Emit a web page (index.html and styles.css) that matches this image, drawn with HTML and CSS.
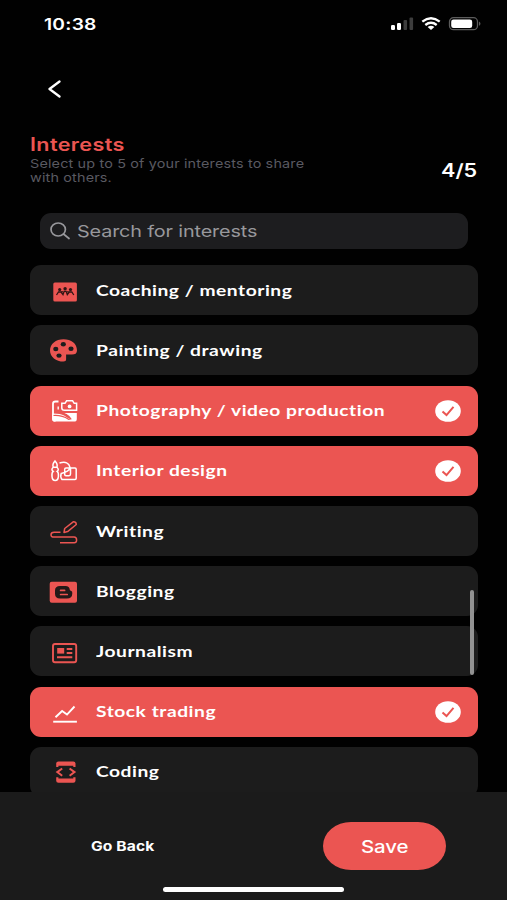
FILE: index.html
```html
<!DOCTYPE html>
<html lang="en">
<head>
<meta charset="utf-8">
<title>Interests</title>
<link rel="stylesheet" href="styles.css">
</head>
<body>
<main class="screen">
  <div class="status">
    <span class="time"><span class="wide">10:38</span></span>
    <svg class="status-icons" viewBox="0 0 92 16" fill="#fff">
      <rect x="1" y="9" width="4" height="5" rx="1.2"/><rect x="7" y="7" width="4" height="7" rx="1.2"/>
      <rect x="13.5" y="4" width="3.6" height="10" rx="1" fill="#3d3d3d"/><rect x="19.5" y="1.5" width="3.6" height="12.5" rx="1" fill="#3d3d3d"/>
      <g fill="none" stroke="#fff" stroke-width="2.4"><path d="M32.300 5.600Q41 -1 49.700 5.600"/><path d="M35.300 9Q41 4.600 46.700 9"/></g>
      <path d="M37.600 11Q41 8.600 44.400 11L41 14Z"/>
      <rect x="59.500" y="1.700" width="28" height="12" rx="4" fill="none" stroke="#5c5c5c" stroke-width="1.300"/>
      <rect x="61.200" y="3.400" width="21" height="8.600" rx="2.300"/><path d="M89 5.500Q92 7.700 89 10Z" fill="#5c5c5c"/>
    </svg>
  </div>
  <svg class="back" viewBox="0 0 14 18" fill="none" stroke="#fff" stroke-width="2.300" stroke-linecap="round" stroke-linejoin="round"><path d="M11.500 1.500L1.500 9l10 7.500"/></svg>
  <header class="heading">
    <div>
      <h1><span class="wide">Interests</span></h1>
      <p><span class="wide">Select up to 5 of your interests to share<br>with others.</span></p>
    </div>
    <span class="count"><span class="wide">4/5</span></span>
  </header>
  <div class="search">
    <svg viewBox="0 0 20 18" fill="none" stroke="#98989c" stroke-width="1.700" stroke-linecap="round"><ellipse cx="8.200" cy="7.500" rx="7.200" ry="6.500"/><path d="M13.500 12l5.500 4.500"/></svg>
    <span class="wide">Search for interests</span>
  </div>
  <ul class="list">
    <li>
      <svg class="icon" viewBox="0 0 28 24"><rect x="3.300" y="3.400" width="23.600" height="19.200" rx="1.500" fill="#eb5552"/><g fill="#301615"><circle cx="9.700" cy="10.600" r="1.600"/><circle cx="15.100" cy="9.700" r="1.700"/><circle cx="20.500" cy="10.600" r="1.600"/></g><path d="M6.500 16l2-3h2.500l2 2.600 1.200-3.300h1.900l1.200 3.300 2-2.600h2.500l2 3M11 13.500l2-1M17.200 12.500l2 1" fill="none" stroke="#301615" stroke-width="1.300"/></svg>
      <span class="wide">Coaching / mentoring</span>
    </li>
    <li>
      <svg class="icon" viewBox="0 0 28 24"><path d="M13.500 .2C5.800.2 0 5 0 11.400c0 6.300 6 11.200 13.500 11.200 1.700 0 2.600-.8 2.600-2V15.500H22c3.100 0 5-1.200 5-4.100C27 4.500 21.200.2 13.500.2Z" fill="#eb5552"/><g fill="#1c1c1c"><ellipse cx="5.800" cy="10" rx="2.600" ry="2.200"/><ellipse cx="13.300" cy="5.300" rx="2.600" ry="2.200"/><ellipse cx="21" cy="9.800" rx="2.600" ry="2.200"/><ellipse cx="9" cy="16.600" rx="2.600" ry="2.200"/></g></svg>
      <span class="wide">Painting / drawing</span>
    </li>
    <li class="on">
      <svg class="icon" viewBox="0 0 28 24"><path d="M8.500 2.500H5.500Q3 2.500 3 4.800V19.500Q3 21.800 5.500 21.800" fill="none" stroke="#fff" stroke-width="1.800"/><path d="M2.200 14.500Q10 14.300 14.500 16.800 18.500 20 20.800 19.800 19.500 17 14.500 14H26.800V20Q26.800 22.600 24 22.600H5Q2.200 22.600 2.200 20Z" fill="#fff"/><path d="M3.500 16.500Q12 16 18.500 20.300L20.800 19.800Q19 17 15.500 15" fill="none" stroke="#eb5552" stroke-width="1.200"/><path d="M11.800 4.300h3.200l1.600-2.500h6L24.200 4.300h2.400V11.300H14.500Q11.800 11.300 11.800 9Z" fill="none" stroke="#fff" stroke-width="1.500"/><circle cx="19.600" cy="7.400" r="1.900" fill="#fff"/><path d="M8.200 7.500v3" stroke="#fff" stroke-width="1.400"/></svg>
      <span class="wide">Photography / video production</span>
      <svg class="check" viewBox="0 0 26 22"><ellipse cx="13" cy="11" rx="12.800" ry="10.800" fill="#fff"/><path d="M7.500 11.500l4 3.600 7-8.300" fill="none" stroke="#eb5552" stroke-width="2"/></svg>
    </li>
    <li class="on">
      <svg class="icon" viewBox="0 0 28 24" fill="none" stroke="#fff" stroke-width="1.500"><path d="M5 1.900Q2 5.200 3.300 8.200H6.900Q8 5.200 5 1.900Z"/><path d="M3.300 8.200C1.200 10 1.800 11.500 3.200 12.300 1.500 13.500 1 21.500 5.200 21.500S8.900 13.500 7.100 12.300C8.500 11.500 8.900 10 6.900 8.200"/><path d="M9.500 4Q18.500 1.500 20 8.300 19.500 12.500 11.200 14.500 10 18 12 20.500H25Q26.200 20.500 26.200 19.300V10.300Q26.200 9 25 9H16Q14.700 9 14.700 10.300V15.500Q14.700 16.700 16 16.700H19Q20.500 16.700 20.500 15V8.500"/></svg>
      <span class="wide">Interior design</span>
      <svg class="check" viewBox="0 0 26 22"><ellipse cx="13" cy="11" rx="12.800" ry="10.800" fill="#fff"/><path d="M7.500 11.500l4 3.600 7-8.300" fill="none" stroke="#eb5552" stroke-width="2"/></svg>
    </li>
    <li>
      <svg class="icon" viewBox="0 0 28 24" fill="none" stroke="#eb5552" stroke-width="1.500" stroke-linejoin="round"><path d="M14 12.400l.7-3.900L23.200 1.800Q26.200 1.500 26.300 4.500L17.600 11.600Z"/><path d="M10.500 12.200H4.200Q1 12.200 1 14.700T4.200 17.100H24Q26.600 17.100 26.600 20T24 22.700H10"/></svg>
      <span class="wide">Writing</span>
    </li>
    <li>
      <svg class="icon" viewBox="0 0 28 24"><rect x="-.3" y="1.700" width="27.300" height="21" rx="2" fill="#eb5552"/><path d="M10 6H15.500Q19.500 6 19.700 9.500 20 10.800 21.300 11 22.500 11.300 22.300 13.500 22.200 18.500 17 18.500H10Q5 18.500 5 13.800V10.500Q5 6 10 6Z" fill="#231918"/><path d="M10.600 10.400h4M10.600 14.500h6.600" stroke="#eb5552" stroke-width="1.700" stroke-linecap="round"/></svg>
      <span class="wide">Blogging</span>
    </li>
    <li>
      <svg class="icon" viewBox="0 0 28 24" fill="none" stroke="#eb5552" stroke-width="1.900"><rect x="3" y="4" width="23.200" height="18.200" rx="2"/><rect x="7.200" y="8" width="7" height="5.600" fill="#eb5552" stroke="none"/><path d="M16.700 9h5.600M16.700 13h5.600M7 17.300h15.300"/></svg>
      <span class="wide">Journalism</span>
    </li>
    <li class="on">
      <svg class="icon" viewBox="0 0 28 24" fill="none" stroke="#fff" stroke-width="1.900"><path d="M5.500 17.300l6.600-6.200 4.900 3.500L24.500 6.500"/><path d="M3.200 21.700h23.700"/></svg>
      <span class="wide">Stock trading</span>
      <svg class="check" viewBox="0 0 26 22"><ellipse cx="13" cy="11" rx="12.800" ry="10.800" fill="#fff"/><path d="M7.500 11.500l4 3.600 7-8.300" fill="none" stroke="#eb5552" stroke-width="2"/></svg>
    </li>
    <li>
      <svg class="icon" viewBox="0 0 28 24"><path d="M6.200 7V3.500Q6.200 1.500 8.400 1.500H23.300Q25.500 1.500 25.500 3.500V7H23.300V5.700H8.400V7ZM6.200 17.200V20.700Q6.200 22.700 8.400 22.700H23.300Q25.500 22.700 25.500 20.700V17.200H23.300V18.500H8.400V17.200Z" fill="#eb5552"/><path d="M12.200 8.500L7.300 12.100l4.900 3.600M19.600 8.500l4.900 3.600-4.900 3.600" fill="none" stroke="#eb5552" stroke-width="2"/></svg>
      <span class="wide">Coding</span>
    </li>
  </ul>
  <i class="scrollbar"></i>
  <footer>
    <div class="actions">
      <a class="goback"><span class="wide">Go Back</span></a>
      <a class="save"><span class="wide">Save</span></a>
    </div>
    <i class="home"></i>
  </footer>
</main>
</body>
</html>
```

FILE: styles.css
```css
* { box-sizing: border-box; }
body { margin: 0; background: #000; color: #fff; font-family: Inter, "Liberation Sans", sans-serif; }
h1, p, ul { margin: 0; padding: 0; }
svg { display: block; flex: none; }
.wide { display: inline-block; white-space: nowrap; transform: scaleX(1.2); transform-origin: left center; }
.screen { position: relative; width: 507px; height: 900px; overflow: hidden; display: flex; flex-direction: column; background: #010101; }
.status { height: 48px; padding: 0 25px 0 44px; display: flex; justify-content: space-between; align-items: center; flex: none; }
.time { font-size: 16px; font-weight: 600; letter-spacing: .2px; }
.status-icons { width: 92px; height: 16px; }
.back { width: 14px; height: 18px; margin: 32px 0 0 48px; }
.heading { height: 115px; padding: 36px 30px 0; display: flex; justify-content: space-between; flex: none; }
h1 { font-size: 18px; line-height: 21px; font-weight: 600; color: #eb5552; letter-spacing: .3px; }
p { font-size: 12px; line-height: 14px; color: #5a5a61; margin-top: 2px; letter-spacing: .13px; }
.count { width: 36px; font-size: 18px; line-height: 22px; font-weight: 600; margin-top: 26px; }
.search { height: 36px; margin: 0 39px 0 40px; padding-left: 9.500px; border-radius: 11px; background: #1d1d1f; color: #98989c; display: flex; align-items: center; gap: 7.500px; font-size: 16.500px; letter-spacing: -.12px; flex: none; }
.search svg { width: 20px; height: 18px; }
.list { list-style: none; margin: 16.300px 29.500px 0 30px; display: flex; flex-direction: column; gap: 10.200px; height: 526.700px; overflow: hidden; flex: none; }
li { height: 50px; flex: none; padding: 0 17px 0 20px; border-radius: 11px; background: #1c1c1c; display: flex; align-items: center; font: 700 16px/24px Lato, sans-serif; letter-spacing: .45px; }
li .wide { margin-top: -1px; }
li.on { background: #eb5552; }
.icon { width: 28px; height: 24px; margin: 1px 18px 0 0; overflow: visible; }
.check { width: 26px; height: 22px; margin-left: auto; }
.scrollbar { position: absolute; left: 470px; top: 590px; width: 4px; height: 85px; border-radius: 2px; background: #929292; }
footer { flex: 1; background: #1b1b1b; display: flex; flex-direction: column; align-items: center; padding-top: 30px; }
.actions { align-self: stretch; height: 48px; display: flex; justify-content: space-between; align-items: center; padding: 0 61px 0 91px; }
.goback { font-size: 13px; font-weight: 700; letter-spacing: .1px; }
.save { width: 123px; height: 48px; border-radius: 28px / 24px; background: #eb5552; display: flex; align-items: center; padding: 2px 0 0 38px; font-size: 17px; font-weight: 500; letter-spacing: -.1px; }
.home { width: 181px; height: 5px; border-radius: 3px; background: #fff; margin-top: 17px; }
```
